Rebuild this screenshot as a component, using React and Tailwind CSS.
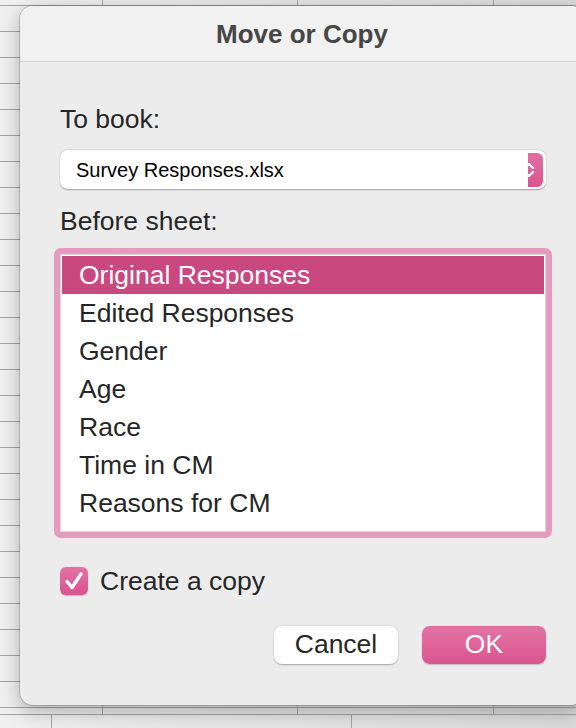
import React from "react";

const rows = ["Original Responses", "Edited Responses", "Gender", "Age", "Race", "Time in CM", "Reasons for CM"];

function SheetRow({ h }) {
  return (
    <div className={`flex shrink-0 ${h} border-b border-[#a4a4a4]`}>
      <div className="w-[103px] border-r border-[#b5b5b5]" />
      <div className="w-[195px] border-r border-[#b5b5b5]" />
      <div className="w-[196px] border-r border-[#b5b5b5]" />
      <div className="flex-1" />
    </div>
  );
}

export default function App() {
  return (
    <div className="relative w-[576px] h-[728px] overflow-hidden bg-[#e6e6e6] font-['Liberation_Sans',Arial,sans-serif]">
      {/* spreadsheet behind */}
      <div className="flex flex-col w-full h-full bg-gradient-to-r from-[#f0f0f0] to-[#dadada]">
        <div className="flex shrink-0 h-[6px] border-b border-[#a4a4a4]">
          <div className="w-[103px] border-r border-[#a4a4a4]" />
          <div className="w-[195px] border-r border-[#a4a4a4]" />
          <div className="w-[196px] border-r border-[#a4a4a4]" />
          <div className="flex-1" />
        </div>
        {Array.from({ length: 27 }).map((_, i) => (
          <SheetRow key={i} h="h-[26px]" />
        ))}
        <div className="flex shrink-0 h-[7px] border-b border-[#a4a4a4]">
          <div className="w-[103px] border-r border-[#a4a4a4]" />
          <div className="w-[195px] border-r border-[#a4a4a4]" />
          <div className="w-[196px] border-r border-[#a4a4a4]" />
          <div className="flex-1" />
        </div>
        <div className="flex flex-1">
          <div className="w-[52px] border-r border-[#a4a4a4]" />
          <div className="w-[300px] border-r border-[#a4a4a4]" />
          <div className="flex-1" />
        </div>
      </div>

      {/* dialog */}
      <div className="absolute left-[20px] top-[6px] w-[564px] h-[699px] rounded-[13px] bg-[#ececec] shadow-[0_0_0_1px_rgba(0,0,0,0.16),0_6px_20px_rgba(0,0,0,0.28)] overflow-hidden flex flex-col">
        <div className="h-[56px] shrink-0 bg-[#f1f1f1] border-b border-[#d2d2d2] flex items-center justify-center">
          <span className="text-[26px] font-bold text-[#464646] leading-none">Move or Copy</span>
        </div>

        <div className="flex flex-col pl-[40px] pr-[38px] pt-[41px]">
          <div className="text-[26.5px] leading-[32px] text-[#262626]">To book:</div>

          <div className="mt-[15px] h-[39px] bg-white rounded-[8px] shadow-[0_0.5px_1.5px_rgba(0,0,0,0.35)] flex items-center justify-between pl-[16px] pr-[3px]">
            <span className="text-[20px] text-black">Survey Responses.xlsx</span>
            <div className="w-[15px] h-[34px] bg-gradient-to-b from-[#e06fa1] to-[#d9548f] rounded-r-[6px] overflow-hidden">
              <svg width="15" height="34" viewBox="0 0 15 34">
                <path d="M-3 15 L1 11 L5 15" stroke="white" strokeWidth="2.2" fill="none" strokeLinecap="round" strokeLinejoin="round" />
                <path d="M-3 19 L1 23 L5 19" stroke="white" strokeWidth="2.2" fill="none" strokeLinecap="round" strokeLinejoin="round" />
              </svg>
            </div>
          </div>

          <div className="mt-[16px] text-[26.5px] leading-[32px] text-[#262626]">Before sheet:</div>

          <div className="mt-[11px] -mx-[6px] h-[290px] bg-[#e59bbd] rounded-[7px] p-[6px]">
            <div className="h-full bg-white border border-[#d6dada] p-[1px] flex flex-col">
              {rows.map((r, i) => (
                <div
                  key={r}
                  className={`h-[38px] shrink-0 flex items-center pl-[17px] pt-[2px] text-[26.5px] ${i === 0 ? "bg-[#c8487f] text-white" : "text-[#262626]"}`}
                >
                  {r}
                </div>
              ))}
            </div>
          </div>

          <div className="mt-[27px] flex items-center gap-[12px]">
            <div className="w-[28px] h-[28px] rounded-[6px] bg-gradient-to-b from-[#e272a4] to-[#d9528f] flex items-center justify-center shadow-[0_0.5px_1px_rgba(0,0,0,0.2)]">
              <svg width="24" height="24" viewBox="0 0 24 24">
                <path d="M5 12.5 L10 18.5 L19 5" stroke="white" strokeWidth="3.4" fill="none" strokeLinecap="round" strokeLinejoin="round" />
              </svg>
            </div>
            <span className="text-[26.5px] leading-[32px] text-[#262626]">Create a copy</span>
          </div>

          <div className="mt-[29px] flex justify-end gap-[24px]">
            <div className="w-[124px] h-[38px] bg-white rounded-[8px] shadow-[0_0.5px_1.5px_rgba(0,0,0,0.3)] flex items-center justify-center text-[26.5px] text-[#262626]">
              Cancel
            </div>
            <div className="w-[124px] h-[38px] rounded-[8px] bg-gradient-to-b from-[#e274a4] to-[#d9548f] shadow-[0_0.5px_1.5px_rgba(0,0,0,0.2)] flex items-center justify-center text-[26.5px] text-white">
              OK
            </div>
          </div>
        </div>
      </div>
    </div>
  );
}
